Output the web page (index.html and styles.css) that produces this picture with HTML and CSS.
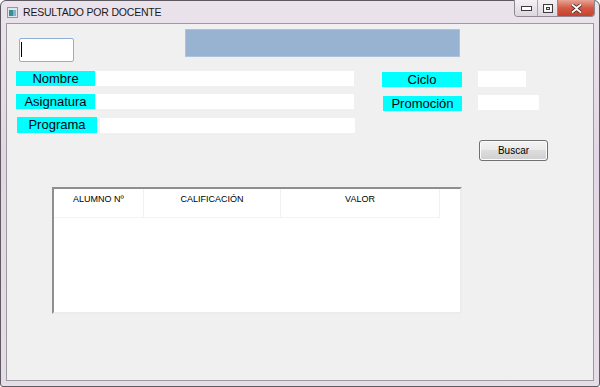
FILE: index.html
```html
<!DOCTYPE html>
<html lang="es">
<head>
  <meta charset="UTF-8">
  <title>RESULTADO POR DOCENTE</title>
  <link rel="stylesheet" href="styles.css">
</head>
<body>
  <div class="window">
    <div class="titlebar">
      <svg class="app-icon" width="11" height="11" viewBox="0 0 11 11">
        <rect x="0.5" y="0.5" width="10" height="10" fill="#dfe7ee" stroke="#8c9aa8"/>
        <rect x="2" y="3" width="4" height="6" fill="#3a8f8a"/>
        <rect x="6" y="3" width="3" height="6" fill="#7fb0d8"/>
      </svg>
      <span class="title">RESULTADO POR DOCENTE</span>
      <div class="caption-buttons">
        <div class="cap-btn cap-min">
          <svg width="11" height="5" viewBox="0 0 11 5"><rect x="0.5" y="0.5" width="10" height="4" fill="#fff" stroke="#3c3c3c"/></svg>
        </div>
        <div class="cap-btn cap-max">
          <svg width="10" height="9" viewBox="0 0 10 9"><rect x="0.5" y="0.5" width="9" height="8" fill="none" stroke="#3c3c3c"/><rect x="2.5" y="2.5" width="5" height="4" fill="none" stroke="#fff" stroke-width="2"/><rect x="3.5" y="3.5" width="3" height="2" fill="none" stroke="#3c3c3c"/></svg>
        </div>
        <div class="cap-btn cap-close">
          <svg width="11" height="9" viewBox="0 0 11 9"><path d="M1 0.5 L5.5 4 L10 0.5 M1 8.5 L5.5 5 L10 8.5" stroke="#4a2a26" stroke-width="3.4" fill="none"/><path d="M1 0.5 L5.5 4 L10 0.5 M1 8.5 L5.5 5 L10 8.5" stroke="#fff" stroke-width="1.8" fill="none"/></svg>
        </div>
      </div>
    </div>

    <div class="client">
      <div class="top-row">
        <div class="textbox code-box"><span class="caret"></span></div>
        <div class="info-panel"></div>
      </div>

      <div class="fields">
        <div class="left-fields">
          <div class="field-row">
            <span class="tag">Nombre</span>
            <span class="input wide"></span>
          </div>
          <div class="field-row">
            <span class="tag">Asignatura</span>
            <span class="input wide"></span>
          </div>
          <div class="field-row shifted">
            <span class="tag">Programa</span>
            <span class="input wide"></span>
          </div>
        </div>
        <div class="right-fields">
          <div class="field-row ciclo">
            <span class="tag">Ciclo</span>
            <span class="input short"></span>
          </div>
          <div class="field-row promo">
            <span class="tag">Promoción</span>
            <span class="input medium"></span>
          </div>
          <button class="btn" type="button">Buscar</button>
        </div>
      </div>

      <div class="listview">
        <div class="list-header">
          <div class="col col-alumno">ALUMNO Nº</div>
          <div class="col col-calif">CALIFICACIÓN</div>
          <div class="col col-valor">VALOR</div>
        </div>
      </div>
    </div>
  </div>
</body>
</html>
```

FILE: styles.css
```css
html, body {
  margin: 0;
  padding: 0;
  background: #fff;
}
.window {
  width: 600px;
  height: 387px;
  box-sizing: border-box;
  border: 1px solid #5e5a62;
  border-radius: 6px 6px 3px 3px;
  background: linear-gradient(#ebe3ec, #e2d8e5 40%, #e6dde8);
  padding: 0 5px 5px;
  display: flex;
  flex-direction: column;
  font-family: "Liberation Sans", Arial, sans-serif;
}
.titlebar {
  height: 22px;
  display: flex;
  align-items: flex-start;
  margin: 0 -1px 0 1px;
}
.app-icon {
  margin-top: 6px;
}
.title {
  font-size: 10.5px;
  color: #1a1a1a;
  margin-left: 5px;
  margin-top: 5px;
  letter-spacing: -0.2px;
}
.caption-buttons {
  margin-left: auto;
  margin-top: -1px;
  display: flex;
  height: 16px;
  border: 1px solid #8c8a90;
  border-top: none;
  border-radius: 0 0 4px 4px;
  overflow: hidden;
}
.cap-btn {
  display: flex;
  align-items: center;
  justify-content: center;
}
.cap-min {
  width: 22px;
  background: linear-gradient(#f4f1f5, #dcd6de);
  border-right: 1px solid #aaa6ad;
}
.cap-max {
  width: 19px;
  background: linear-gradient(#f4f1f5, #dcd6de);
  border-right: 1px solid #8c8a90;
}
.cap-close {
  width: 36px;
  background: linear-gradient(#e8a493, #d45a45 50%, #c6402c);
}
.client {
  flex: 1;
  background: #f0f0f0;
  border: 1px solid #9d9a9f;
  position: relative;
}
.top-row {
  display: flex;
  align-items: flex-start;
  height: 40px;
}
.textbox {
  background: #fff;
  border: 1px solid #8fb0d6;
  border-radius: 2px;
  box-sizing: border-box;
}
.code-box {
  width: 55px;
  height: 24px;
  margin: 14px 0 0 12px;
  position: relative;
}
.caret {
  position: absolute;
  left: 1px;
  top: 3px;
  width: 1px;
  height: 15px;
  background: #000;
}
.info-panel {
  width: 275px;
  height: 28px;
  margin: 5px 0 0 111px;
  background: #98b3d1;
  border: 1px solid #aec3db;
  box-sizing: border-box;
}
.fields {
  display: flex;
  margin-top: 7px;
}
.left-fields {
  width: 366px;
}
.field-row {
  display: flex;
  align-items: center;
  height: 15px;
  margin-bottom: 8px;
}
.left-fields .field-row {
  margin-left: 9px;
}
.left-fields .field-row.shifted {
  margin-left: 10px;
  margin-top: 3px;
  height: 16px;
}
.tag {
  background: #00ffff;
  width: 79px;
  height: 15px;
  line-height: 16px;
  font-size: 13px;
  color: #05050f;
  text-align: center;
  flex-shrink: 0;
}
.input {
  background: #fff;
  height: 15px;
  display: block;
}
.wide {
  width: 258px;
  margin-left: 1px;
}
.shifted .tag {
  width: 80px;
  height: 16px;
}
.shifted .wide {
  width: 255px;
  margin-left: 3px;
}
.right-fields {
  width: 180px;
  margin-left: 9px;
}
.ciclo .tag {
  width: 80px;
  margin-top: 2px;
}
.ciclo .input {
  height: 16px;
}
.short {
  width: 48px;
  margin-left: 16px;
}
.promo {
  margin-left: 1px;
  height: 17px;
}
.promo .tag {
  width: 79px;
  margin-top: 1px;
}
.medium {
  width: 61px;
  margin-left: 16px;
}
.btn {
  display: block;
  width: 69px;
  height: 21px;
  margin: 29px 0 0 97px;
  padding: 0;
  border: 1px solid #707070;
  border-radius: 3px;
  background: linear-gradient(#f3f3f3, #ebebeb 45%, #dddddd 50%, #cfcfcf);
  font-family: "Liberation Sans", Arial, sans-serif;
  font-size: 10px;
  color: #000;
  box-shadow: inset 0 0 0 1px #fcfcfc;
}
.listview {
  width: 410px;
  height: 127px;
  margin: 26px 0 0 45px;
  box-sizing: border-box;
  background: #fff;
  border-top: 2px solid #8f8f8f;
  border-left: 2px solid #8f8f8f;
  border-right: 2px solid #ececec;
  border-bottom: 2px solid #ececec;
}
.list-header {
  display: flex;
  height: 29px;
  width: 386px;
  border-bottom: 1px solid #f3f3f3;
  box-sizing: border-box;
}
.col {
  font-size: 9px;
  color: #000;
  text-align: center;
  padding-top: 5px;
  border-right: 1px solid #f1f1f1;
  box-sizing: border-box;
}
.col-alumno { width: 90px; }
.col-calif { width: 137px; }
.col-valor { width: 159px; }
```
